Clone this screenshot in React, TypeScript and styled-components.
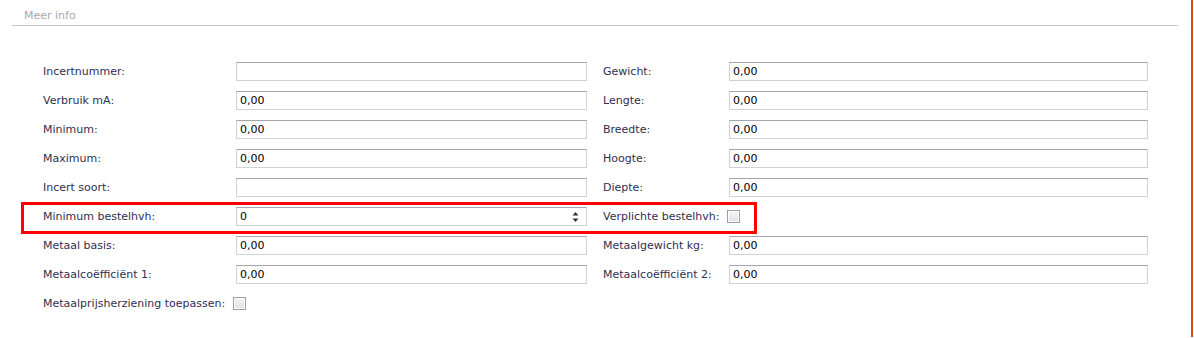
import React from "react";
import styled, { createGlobalStyle } from "styled-components";

const GlobalStyle = createGlobalStyle`
  html, body {
    margin: 0;
    padding: 0;
    background: #ffffff;
  }
  body {
    font-family: "DejaVu Sans", Verdana, sans-serif;
    font-size: 11px;
  }
`;

interface IField {
  label: string;
  value?: string;
  kind?: "text" | "number" | "check";
}

interface IRow {
  left: IField;
  right?: IField;
  highlight?: boolean;
}

const rows: IRow[] = [
  { left: { label: "Incertnummer:", value: "" }, right: { label: "Gewicht:", value: "0,00" } },
  { left: { label: "Verbruik mA:", value: "0,00" }, right: { label: "Lengte:", value: "0,00" } },
  { left: { label: "Minimum:", value: "0,00" }, right: { label: "Breedte:", value: "0,00" } },
  { left: { label: "Maximum:", value: "0,00" }, right: { label: "Hoogte:", value: "0,00" } },
  { left: { label: "Incert soort:", value: "" }, right: { label: "Diepte:", value: "0,00" } },
  {
    left: { label: "Minimum bestelhvh:", value: "0", kind: "number" },
    right: { label: "Verplichte bestelhvh:", kind: "check" },
    highlight: true,
  },
  { left: { label: "Metaal basis:", value: "0,00" }, right: { label: "Metaalgewicht kg:", value: "0,00" } },
  { left: { label: "Metaalcoëfficiënt 1:", value: "0,00" }, right: { label: "Metaalcoëfficiënt 2:", value: "0,00" } },
  { left: { label: "Metaalprijsherziening toepassen:", kind: "check" } },
];

const Page = styled.div`
  display: flex;
  width: 1194px;
  height: 338px;
`;

const Content = styled.div`
  flex: 1;
  padding-top: 9px;
`;

const EdgeStripe = styled.div`
  width: 2px;
  height: 337px;
  margin-right: 1px;
  background: #e8431f;
`;

const Section = styled.fieldset`
  margin: 0 13px 0 12px;
  padding: 0;
  border: none;
`;

const Legend = styled.div`
  padding: 0 0 2px 12px;
  color: #a9a9b0;
  font-size: 11px;
  line-height: 14px;
  border-bottom: 1px solid #c8c8cc;
`;

const Form = styled.div`
  display: flex;
  flex-direction: column;
  gap: 10px;
  padding: 36px 0 0 31px;
`;

const Row = styled.div<{ $highlight?: boolean }>`
  position: relative;
  display: grid;
  grid-template-columns: 193px 351px 16px 126px 419px;
  align-items: center;
  height: 19px;

  &::after {
    content: "";
    display: ${(p) => (p.$highlight ? "block" : "none")};
    position: absolute;
    left: -22px;
    top: -5px;
    width: 736px;
    height: 32px;
    box-sizing: border-box;
    border: 3px solid #ff0000;
    pointer-events: none;
  }
`;

const Label = styled.div`
  color: #2f2f4f;
  white-space: nowrap;
  line-height: 19px;
`;

const InlineLabel = styled(Label)<{ $span: string }>`
  grid-column: ${(p) => p.$span};
  display: flex;
  align-items: center;
  gap: 8px;
`;

const InputBox = styled.div`
  position: relative;
  height: 19px;
  box-sizing: border-box;
  border: 1px solid #d2d2d6;
  border-top-color: #a4a4ac;
  padding: 0 3px;
  color: #000000;
  line-height: 17px;
  background: #ffffff;
`;

const Spinner = styled.svg`
  position: absolute;
  right: 7px;
  top: 3px;
`;

const CheckBox = styled.span`
  display: inline-block;
  width: 13px;
  height: 13px;
  box-sizing: border-box;
  border: 1px solid #9c9ca4;
  background: linear-gradient(#f4f4f6, #e2e2e6);
  box-shadow: inset 0 0 0 1px #ffffff;
`;

const Spacer = styled.div``;

const FieldInput: React.FunctionComponent<{ field: IField }> = ({ field }) => {
  if (field.kind === "check") {
    return <CheckBox />;
  }
  return (
    <InputBox>
      {field.value}
      {field.kind === "number" && (
        <Spinner width="7" height="12" viewBox="0 0 7 12">
          <path d="M3.5 1 L6.5 4.5 L0.5 4.5 Z" fill="#333" />
          <path d="M0.5 7.5 L6.5 7.5 L3.5 11 Z" fill="#333" />
        </Spinner>
      )}
    </InputBox>
  );
};

const App: React.FunctionComponent = () => {
  return (
    <>
      <GlobalStyle />
      <Page>
        <Content>
          <Section>
            <Legend>Meer info</Legend>
            <Form>
              {rows.map((row, i) =>
                row.left.kind === "check" && !row.right ? (
                  <Row key={i}>
                    <InlineLabel $span="1 / 3">
                      {row.left.label}
                      <CheckBox />
                    </InlineLabel>
                  </Row>
                ) : (
                  <Row key={i} $highlight={row.highlight}>
                    <Label>{row.left.label}</Label>
                    <FieldInput field={row.left} />
                    <Spacer />
                    {row.right && row.right.kind === "check" ? (
                      <InlineLabel $span="4 / 6">
                        {row.right.label}
                        <CheckBox />
                      </InlineLabel>
                    ) : row.right ? (
                      <>
                        <Label>{row.right.label}</Label>
                        <FieldInput field={row.right} />
                      </>
                    ) : null}
                  </Row>
                )
              )}
            </Form>
          </Section>
        </Content>
        <EdgeStripe />
      </Page>
    </>
  );
};

export default App;
